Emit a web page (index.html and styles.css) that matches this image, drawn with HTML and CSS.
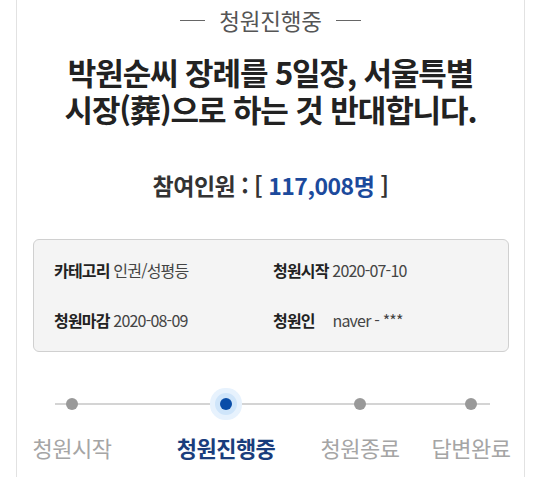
FILE: index.html
```html
<!DOCTYPE html>
<html lang="ko">
<head>
<meta charset="utf-8">
<link rel="stylesheet" href="styles.css">
</head>
<body>
<div class="wrap">
  <div class="status"><span class="dash"></span><span class="status-text">청원진행중</span><span class="dash"></span></div>
  <h1 class="title">박원순씨 장례를 5일장, 서울특별<br>시장(葬)으로 하는 것 반대합니다.</h1>
  <p class="count">참여인원 : [ <span class="num">117,008명</span> ]</p>
  <div class="info">
    <div class="cell"><b>카테고리</b> 인권/성평등</div>
    <div class="cell"><b>청원시작</b> 2020-07-10</div>
    <div class="cell"><b>청원마감</b> 2020-08-09</div>
    <div class="cell"><b>청원인</b> <span class="gap"></span>naver - ***</div>
  </div>
  <div class="steps">
    <div class="line"></div>
    <div class="step"><span class="dot"></span><span class="label">청원시작</span></div>
    <div class="step active"><span class="dot"></span><span class="label">청원진행중</span></div>
    <div class="step"><span class="dot"></span><span class="label">청원종료</span></div>
    <div class="step"><span class="dot"></span><span class="label">답변완료</span></div>
  </div>
</div>
</body>
</html>
```
FILE: styles.css
```css
html, body { margin: 0; padding: 0; background: #fff; }
body { font-family: "Noto Sans CJK KR", "Noto Sans", sans-serif; color: #222; }
.wrap {
  margin: 0 15px 0 16px;
  border-left: 1px solid #e2e2e2;
  border-right: 1px solid #e2e2e2;
  height: 477px;
  box-sizing: border-box;
  padding-top: 4px;
  overflow: hidden;
}
.status {
  display: flex; justify-content: center; align-items: center;
  gap: 14px; height: 32px;
  font-size: 22.5px; color: #555; letter-spacing: -0.2px;
}
.dash { width: 25px; height: 1px; background: #666; }
.title {
  margin: 17px 0 0; text-align: center;
  font-size: 31px; line-height: 37px; font-weight: 700; letter-spacing: -1.1px; color: #222;
}
.count {
  margin: 43px 0 0; text-align: center;
  font-size: 23px; font-weight: 700; line-height: 30px; color: #333; letter-spacing: -0.5px;
}
.num { color: #1c4a9c; }
.info {
  margin: 39px 15px 0 16px;
  background: #f4f4f4; border: 1px solid #d0d0d0; border-radius: 6px;
  display: grid; grid-template-columns: 219px 1fr;
  padding: 17px 0 18px 20px; row-gap: 24px;
  font-size: 16px; letter-spacing: -0.8px; color: #444;
}
.cell { line-height: 26px; }
.cell b { color: #222; font-weight: 700; }
.gap { display: inline-block; width: 14px; }
.steps {
  position: relative; margin-top: 29px;
  display: flex; padding-left: 55px;
}
.line { position: absolute; left: 38px; right: 34px; top: 22px; height: 2px; background: #d4d4d4; }
.step { width: 0; display: flex; flex-direction: column; align-items: center; position: relative; }
.step:nth-child(3) { margin-left: 154px; }
.step:nth-child(4) { margin-left: 134px; }
.step:nth-child(5) { margin-left: 111px; }
.dot { width: 12px; height: 12px; border-radius: 50%; background: #999; margin-top: 17px; position: relative; flex: none; }
.active .dot {
  background: #0a4da8;
  box-shadow: 0 0 0 5px #cfe5fa, 0 0 0 10px #e7f2fd;
}
.label { margin-top: 22px; font-size: 22px; color: #a5a5a5; letter-spacing: -0.5px; line-height: 30px; white-space: nowrap; }
.active .label { color: #1a3d7c; font-weight: 700; }
```
